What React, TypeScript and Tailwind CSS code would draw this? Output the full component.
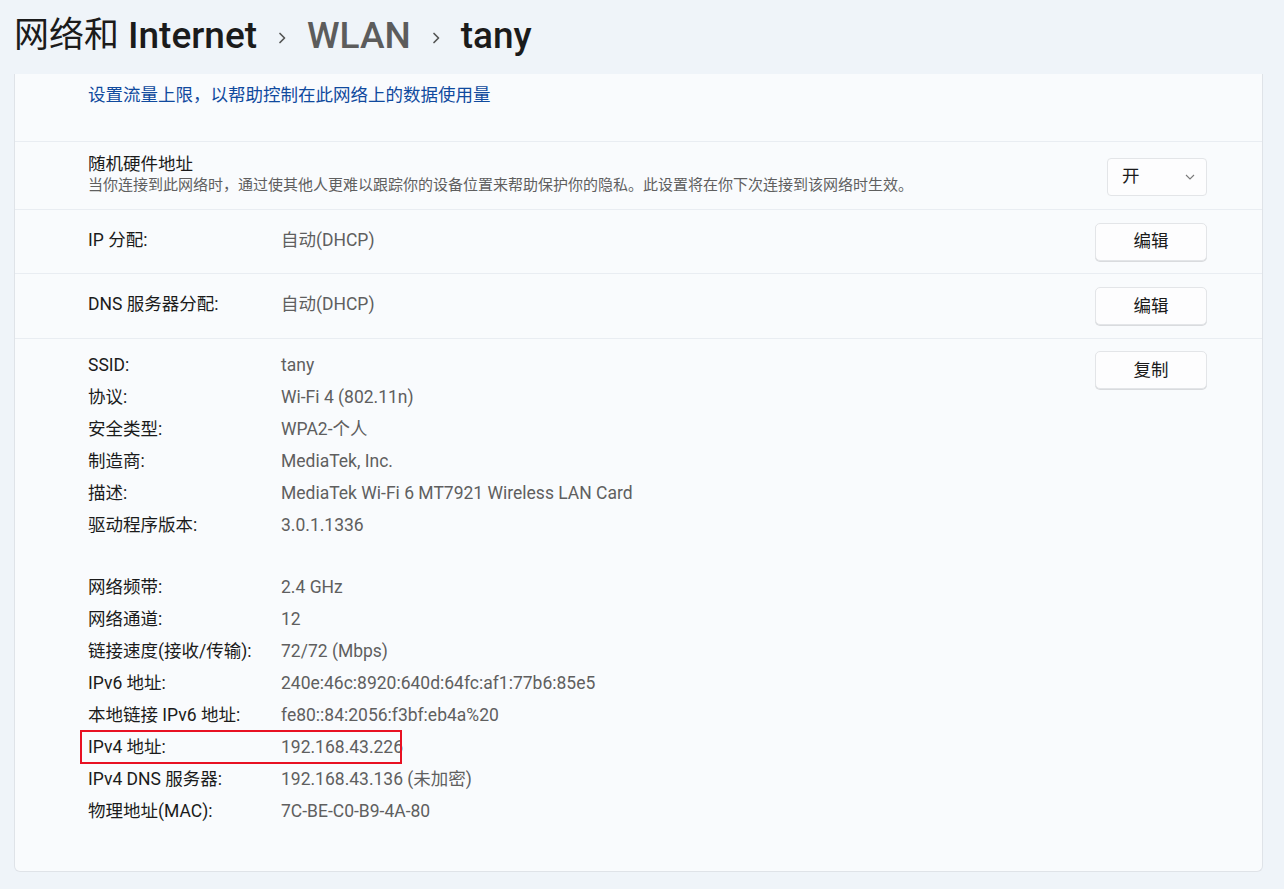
import React from "react";

const font = { fontFamily: 'Roboto, "Noto Sans CJK SC", sans-serif' };

function Btn({ children }: { children: React.ReactNode }) {
  return (
    <div className="w-[112px] h-[38px] rounded-[5px] border border-[#e3e5e8] bg-[#fdfdfe] flex items-center justify-center text-[17.5px] text-[#1b1b1b] shadow-[0_1px_0_#d9dbde]">
      {children}
    </div>
  );
}

const details1: [string, string][] = [
  ["SSID:", "tany"],
  ["协议:", "Wi-Fi 4 (802.11n)"],
  ["安全类型:", "WPA2-个人"],
  ["制造商:", "MediaTek, Inc."],
  ["描述:", "MediaTek Wi-Fi 6 MT7921 Wireless LAN Card"],
  ["驱动程序版本:", "3.0.1.1336"],
];

const details2: [string, string][] = [
  ["网络频带:", "2.4 GHz"],
  ["网络通道:", "12"],
  ["链接速度(接收/传输):", "72/72 (Mbps)"],
  ["IPv6 地址:", "240e:46c:8920:640d:64fc:af1:77b6:85e5"],
  ["本地链接 IPv6 地址:", "fe80::84:2056:f3bf:eb4a%20"],
  ["IPv4 地址:", "192.168.43.226"],
  ["IPv4 DNS 服务器:", "192.168.43.136 (未加密)"],
  ["物理地址(MAC):", "7C-BE-C0-B9-4A-80"],
];

function Row({ k, v, boxed }: { k: string; v: string; boxed?: boolean }) {
  return (
    <div className="relative flex h-[32px] items-center text-[17.5px]">
      <div className="w-[193px] text-[#1b1b1b]">{k}</div>
      <div className="text-[#5f5f5f]">{v}</div>
      {boxed && (
        <div className="absolute left-[-8px] top-[-1px] w-[322px] h-[34px] border-2 border-[#e81123]" />
      )}
    </div>
  );
}

function Chevron() {
  return (
    <svg width="16" height="16" viewBox="0 0 16 16" className="mx-[17px] mt-[4px]">
      <path d="M6 3.5 L10.5 8 L6 12.5" stroke="#555" strokeWidth="1.7" fill="none" strokeLinecap="round" strokeLinejoin="round" />
    </svg>
  );
}

export default function App() {
  return (
    <div className="w-[1284px] h-[889px] overflow-hidden bg-[#eff4f9]" style={font}>
      <div className="h-[74px] flex items-center pl-[14px] pb-[2px] text-[37px] font-medium text-[#1b1b1b]">
        <span className="font-normal text-[35px]">网络和</span>
        <span className="ml-[9px]">Internet</span>
        <Chevron />
        <span className="text-[#5c5c5c]">WLAN</span>
        <Chevron />
        <span>tany</span>
      </div>
      <div className="ml-[14px] w-[1249px] h-[798px] bg-[#f9fbfd] border border-t-0 border-[#dfe3e8] rounded-b-[6px]">
        <div className="h-[68px] pl-[73px] pt-[9px] text-[17.5px] leading-[24px] text-[#104a9e] border-b border-[#e9edf2]">
          设置流量上限，以帮助控制在此网络上的数据使用量
        </div>
        <div className="h-[68px] pl-[73px] pr-[55px] flex items-center justify-between border-b border-[#e9edf2]">
          <div className="-mt-[3px]">
            <div className="text-[17.5px] leading-[22px] text-[#1b1b1b]">随机硬件地址</div>
            <div className="text-[15px] leading-[20px] text-[#5f5f5f]">
              当你连接到此网络时，通过使其他人更难以跟踪你的设备位置来帮助保护你的隐私。此设置将在你下次连接到该网络时生效。
            </div>
          </div>
          <div className="w-[100px] h-[38px] border border-[#e3e5e8] bg-[#fdfdfe] rounded-[4px] flex items-center justify-between pl-[14px] pr-[10px] text-[17.5px] text-[#1b1b1b] mt-[2px]">
            <span>开</span>
            <svg width="12" height="12" viewBox="0 0 12 12">
              <path d="M2 4 L6 8 L10 4" stroke="#7a7a7a" strokeWidth="1.1" fill="none" />
            </svg>
          </div>
        </div>
        <div className="h-[64px] pl-[73px] pr-[55px] flex items-center justify-between border-b border-[#e9edf2]">
          <div className="flex text-[17.5px] -mt-[3px]">
            <div className="w-[193px] text-[#1b1b1b]">IP 分配:</div>
            <div className="text-[#5f5f5f]">自动(DHCP)</div>
          </div>
          <Btn>编辑</Btn>
        </div>
        <div className="h-[65px] pl-[73px] pr-[55px] flex items-center justify-between border-b border-[#e9edf2]">
          <div className="flex text-[17.5px] -mt-[3px]">
            <div className="w-[193px] text-[#1b1b1b]">DNS 服务器分配:</div>
            <div className="text-[#5f5f5f]">自动(DHCP)</div>
          </div>
          <Btn>编辑</Btn>
        </div>
        <div className="pl-[73px] pr-[55px] pt-[10px] flex justify-between">
          <div className="flex flex-col">
            {details1.map(([k, v]) => (
              <Row key={k} k={k} v={v} />
            ))}
            <div className="h-[30px]" />
            {details2.map(([k, v]) => (
              <Row key={k} k={k} v={v} boxed={k === "IPv4 地址:"} />
            ))}
          </div>
          <div className="pt-[2px]">
            <Btn>复制</Btn>
          </div>
        </div>
      </div>
    </div>
  );
}
